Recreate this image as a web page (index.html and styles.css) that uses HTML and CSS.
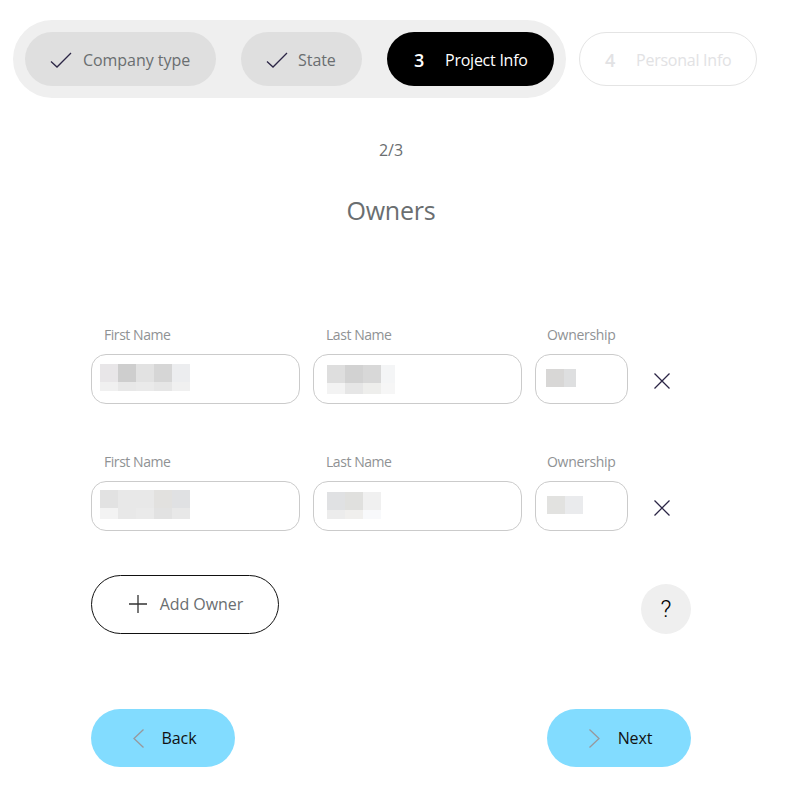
FILE: index.html
```html
<!DOCTYPE html>
<html lang="en">
<head>
  <meta charset="UTF-8">
  <meta name="viewport" content="width=device-width, initial-scale=1.0">
  <title>Owners</title>
  <link rel="stylesheet" href="styles.css">
</head>
<body>
  <!-- Steps -->
  <div class="steps">
    <div class="steps-done">
      <div class="step step-done step-company">
        <svg class="check" width="22" height="16" viewBox="0 0 22 16"><path d="M1 9.5 L7 15 L21 1"/></svg>
        <span>Company type</span>
      </div>
      <div class="step step-done step-state">
        <svg class="check" width="22" height="16" viewBox="0 0 22 16"><path d="M1 9.5 L7 15 L21 1"/></svg>
        <span>State</span>
      </div>
      <div class="step step-active">
        <b class="step-num">3</b>
        <span>Project Info</span>
      </div>
    </div>
    <div class="step step-todo">
      <b class="step-num">4</b>
      <span>Personal Info</span>
    </div>
  </div>

  <div class="counter">2/3</div>
  <h1>Owners</h1>

  <form class="owners">
    <div class="owner-row">
      <div class="field field-name">
        <label>First Name</label>
        <div class="box">
          <div class="blur blur-first1">
            <i class="s1"></i><i class="s2"></i><i class="s3"></i><i class="s4"></i><i class="s5"></i>
            <i class="s6"></i><i class="s7"></i><i class="s8"></i><i class="s9"></i><i class="s6"></i>
          </div>
        </div>
      </div>
      <div class="field field-name">
        <label>Last Name</label>
        <div class="box">
          <div class="blur blur-last1">
            <i class="s10"></i><i class="s11"></i><i class="s12"></i><i class="s13"></i>
            <i class="s14"></i><i class="s9"></i><i class="s15"></i><i class="s16"></i>
          </div>
        </div>
      </div>
      <div class="field field-share">
        <label>Ownership</label>
        <div class="box">
          <div class="blur blur-own1"><i class="s17"></i><i class="s18"></i></div>
        </div>
      </div>
      <svg class="remove" width="18" height="18" viewBox="0 0 18 18"><path d="M1.5 1.5 L16.5 16.5 M16.5 1.5 L1.5 16.5"/></svg>
    </div>

    <div class="owner-row">
      <div class="field field-name">
        <label>First Name</label>
        <div class="box">
          <div class="blur blur-first2">
            <i class="s3"></i><i class="s7"></i><i class="s7"></i><i class="s19"></i><i class="s20"></i>
            <i class="s14"></i><i class="s7"></i><i class="s8"></i><i class="s3"></i><i class="s7"></i>
          </div>
        </div>
      </div>
      <div class="field field-name">
        <label>Last Name</label>
        <div class="box">
          <div class="blur blur-last2">
            <i class="s20"></i><i class="s21"></i><i class="s6"></i>
            <i class="s22"></i><i class="s23"></i><i class="s24"></i>
          </div>
        </div>
      </div>
      <div class="field field-share">
        <label>Ownership</label>
        <div class="box">
          <div class="blur blur-own2"><i class="s25"></i><i class="s26"></i></div>
        </div>
      </div>
      <svg class="remove" width="18" height="18" viewBox="0 0 18 18"><path d="M1.5 1.5 L16.5 16.5 M16.5 1.5 L1.5 16.5"/></svg>
    </div>

    <div class="add-row">
      <button type="button" class="add-btn">
        <svg class="plus" width="18" height="18" viewBox="0 0 18 18"><path d="M9 0 V18 M0 9 H18"/></svg>
        Add Owner
      </button>
      <button type="button" class="help">?</button>
    </div>

    <div class="nav-row">
      <button type="button" class="nav-btn">
        <svg class="chevron" width="11" height="19" viewBox="0 0 11 19"><path d="M10.5 .5 L1 9.5 L10.5 18.5"/></svg>
        Back
      </button>
      <button type="button" class="nav-btn">
        <svg class="chevron" width="11" height="19" viewBox="0 0 11 19"><path d="M.5 .5 L10 9.5 L.5 18.5"/></svg>
        Next
      </button>
    </div>
  </form>
</body>
</html>
```

FILE: styles.css
```css
body {
  margin: 0;
  background-color: #fff;
  font-family: "Open Sans", sans-serif;
  color: #6a6e70;
}

/* Steps */
.steps {
  display: flex;
  align-items: center;
  gap: 13px;
  padding: 20px 0 0 13px;
}

.steps-done {
  display: flex;
  gap: 25px;
  padding: 12px;
  background-color: #efefef;
  border-radius: 39px;
}

.step {
  display: flex;
  align-items: center;
  box-sizing: border-box;
  height: 54px;
  padding-top: 1px;
  border-radius: 27px;
  font-size: 16px;
  letter-spacing: -0.05px;
}

.step-done {
  padding-left: 25px;
  gap: 11px;
  background-color: #dfdfdf;
}

.step-company {
  width: 191px;
}

.step-state {
  width: 121px;
  gap: 10px;
}

.step-active {
  width: 167px;
  padding-left: 27px;
  gap: 21px;
  background-color: #000;
  color: #fff;
  letter-spacing: -0.25px;
}

.step-todo {
  width: 178px;
  padding-left: 25px;
  gap: 21px;
  border: 1px solid #e4e4e4;
  color: #e2e2e4;
  letter-spacing: -0.25px;
}

.step-num {
  font-size: 18px;
  font-weight: 600;
}

.check {
  fill: none;
  stroke: #2b2545;
  stroke-width: 1.3;
}

/* Heading */
.counter {
  width: 782px;
  margin-top: 41px;
  text-align: center;
  font-size: 16px;
  line-height: 22px;
}

h1 {
  width: 782px;
  margin: 32px 0 0;
  text-align: center;
  font-size: 25px;
  font-weight: 400;
  line-height: 34px;
  letter-spacing: -0.2px;
}

/* Owners form */
.owners {
  width: 600px;
  margin: 99px 0 0 91px;
}

.owner-row {
  display: flex;
  align-items: flex-end;
  gap: 13px;
  height: 78px;
  margin-bottom: 49px;
}

.field label {
  display: block;
  padding-left: 13px;
  margin-bottom: 10px;
  font-size: 14px;
  line-height: 19px;
  letter-spacing: -0.45px;
  color: #8f9294;
}

.field-share label {
  padding-left: 12px;
  letter-spacing: -0.3px;
}

.box {
  box-sizing: border-box;
  height: 50px;
  border: 1px solid #cbcbcb;
  border-radius: 15px;
}

.field-name {
  width: 209px;
}

.field-share {
  width: 93px;
}

.remove {
  margin: 0 0 14px 12px;
  fill: none;
  stroke: #2b2545;
  stroke-width: 1.3;
}

/* Pixelated values */
.blur {
  display: grid;
}

.blur i {
  display: block;
}

.blur-first1 {
  grid-template-columns: repeat(5, 18px);
  grid-template-rows: 18px 9px;
  margin: 9px 0 0 8px;
}

.blur-last1 {
  grid-template-columns: 18px 18px 18px 14px;
  grid-template-rows: 18px 11px;
  margin: 10px 0 0 13px;
}

.blur-own1 {
  grid-template-columns: 18px 12px;
  grid-template-rows: 18px;
  margin: 14px 0 0 10px;
}

.blur-first2 {
  grid-template-columns: repeat(5, 18px);
  grid-template-rows: 18px 11px;
  margin: 8px 0 0 8px;
}

.blur-last2 {
  grid-template-columns: repeat(3, 18px);
  grid-template-rows: 18px 9px;
  margin: 10px 0 0 13px;
}

.blur-own2 {
  grid-template-columns: repeat(2, 18px);
  grid-template-rows: 18px;
  margin: 14px 0 0 11px;
}

.s1 { background: #e8e6e8; }
.s2 { background: #cecece; }
.s3 { background: #e2e2e2; }
.s4 { background: #d6d6d6; }
.s5 { background: #ecedef; }
.s6 { background: #f0f0f0; }
.s7 { background: #e8e8e8; }
.s8 { background: #eaeaea; }
.s9 { background: #e6e6e6; }
.s10 { background: #dedede; }
.s11 { background: #d2d2d2; }
.s12 { background: #d8d8d8; }
.s13 { background: #f4f5f6; }
.s14 { background: #f3f3f3; }
.s15 { background: #eeeeec; }
.s16 { background: #f6f6f6; }
.s17 { background: #d8d7d6; }
.s18 { background: #dedfe0; }
.s19 { background: #e2e1df; }
.s20 { background: #e0e1e3; }
.s21 { background: #e0e0de; }
.s22 { background: #ececec; }
.s23 { background: #f0efed; }
.s24 { background: #f8f9fb; }
.s25 { background: #e2e2e0; }
.s26 { background: #eaebed; }

/* Buttons */
button {
  display: flex;
  align-items: center;
  justify-content: center;
  padding: 0;
  border: none;
  font-family: "Open Sans", sans-serif;
  cursor: pointer;
}

.add-row {
  display: flex;
  justify-content: space-between;
  align-items: flex-end;
  margin-top: -5px;
}

.add-btn {
  gap: 13px;
  width: 188px;
  height: 59px;
  padding: 0 0 2px 2px;
  background-color: #fff;
  border: 1px solid #111;
  border-radius: 30px;
  font-size: 16px;
  letter-spacing: -0.05px;
  color: #6a6e70;
}

.plus {
  fill: none;
  stroke: #333;
  stroke-width: 1.3;
}

.help {
  width: 50px;
  height: 50px;
  background-color: #efefef;
  border-radius: 50%;
  font-family: Roboto, sans-serif;
  font-size: 24px;
  font-weight: 300;
  color: #000;
}

.nav-row {
  display: flex;
  justify-content: space-between;
  margin-top: 75px;
}

.nav-btn {
  gap: 18px;
  width: 144px;
  height: 58px;
  padding-left: 3px;
  background-color: #82dcff;
  border-radius: 29px;
  font-size: 16px;
  letter-spacing: -0.1px;
  color: #111;
}

.chevron {
  fill: none;
  stroke: #98989c;
  stroke-width: 1.3;
}
```
